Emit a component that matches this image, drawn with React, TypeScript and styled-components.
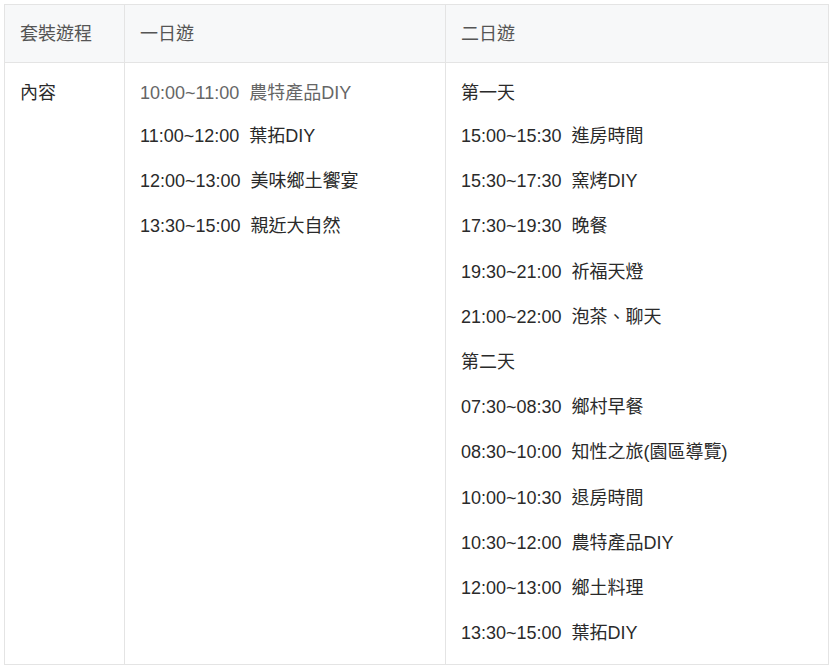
import styled, { createGlobalStyle } from "styled-components";

type Item = { time?: string; text: string; muted?: boolean };

const oneDay: Item[] = [
  { time: "10:00~11:00", text: "農特產品DIY", muted: true },
  { time: "11:00~12:00", text: "葉拓DIY" },
  { time: "12:00~13:00", text: "美味鄉土饗宴" },
  { time: "13:30~15:00", text: "親近大自然" },
];

const twoDay: Item[] = [
  { text: "第一天" },
  { time: "15:00~15:30", text: "進房時間" },
  { time: "15:30~17:30", text: "窯烤DIY" },
  { time: "17:30~19:30", text: "晚餐" },
  { time: "19:30~21:00", text: "祈福天燈" },
  { time: "21:00~22:00", text: "泡茶、聊天" },
  { text: "第二天" },
  { time: "07:30~08:30", text: "鄉村早餐" },
  { time: "08:30~10:00", text: "知性之旅(園區導覽)" },
  { time: "10:00~10:30", text: "退房時間" },
  { time: "10:30~12:00", text: "農特產品DIY" },
  { time: "12:00~13:00", text: "鄉土料理" },
  { time: "13:30~15:00", text: "葉拓DIY" },
];

const Schedule = ({ items }: { items: Item[] }) => (
  <List>
    {items.map((item, i) => (
      <Line key={i} $muted={item.muted}>
        {item.time ? `${item.time}\u00a0\u00a0${item.text}` : item.text}
      </Line>
    ))}
  </List>
);

export default function App() {
  return (
    <>
      <GlobalStyle />
      <Page>
        <Table>
          <colgroup>
            <col style={{ width: 120 }} />
            <col style={{ width: 321 }} />
            <col />
          </colgroup>
          <thead>
            <tr>
              <Th>套裝遊程</Th>
              <Th>一日遊</Th>
              <Th>二日遊</Th>
            </tr>
          </thead>
          <tbody>
            <tr>
              <Td>
                <Line>內容</Line>
              </Td>
              <Td>
                <Schedule items={oneDay} />
              </Td>
              <Td>
                <Schedule items={twoDay} />
              </Td>
            </tr>
          </tbody>
        </Table>
      </Page>
    </>
  );
}

const GlobalStyle = createGlobalStyle`
  body {
    margin: 0;
    background: #ffffff;
    font-family: "Liberation Sans", "Noto Sans CJK TC", sans-serif;
    color: #2a2a2a;
  }
`;

const Page = styled.div`
  padding: 4px;
`;

const Table = styled.table`
  width: 825px;
  border-collapse: collapse;
  table-layout: fixed;
  font-size: 18px;
  line-height: 27px;
`;

const Th = styled.th`
  background: #f7f8f9;
  border: 1px solid #e4e4e4;
  padding: 16px 15px 14px;
  text-align: left;
  font-weight: normal;
  color: #555555;
`;

const Td = styled.td`
  border: 1px solid #e4e4e4;
  padding: 17px 15px 17px;
  vertical-align: top;
`;

const List = styled.div`
  display: flex;
  flex-direction: column;
  gap: 18.2px;

  & > :first-child {
    margin-bottom: -2.2px;
  }
`;

const Line = styled.div<{ $muted?: boolean }>`
  color: ${(p) => (p.$muted ? "#666666" : "#2a2a2a")};
  white-space: nowrap;
`;
